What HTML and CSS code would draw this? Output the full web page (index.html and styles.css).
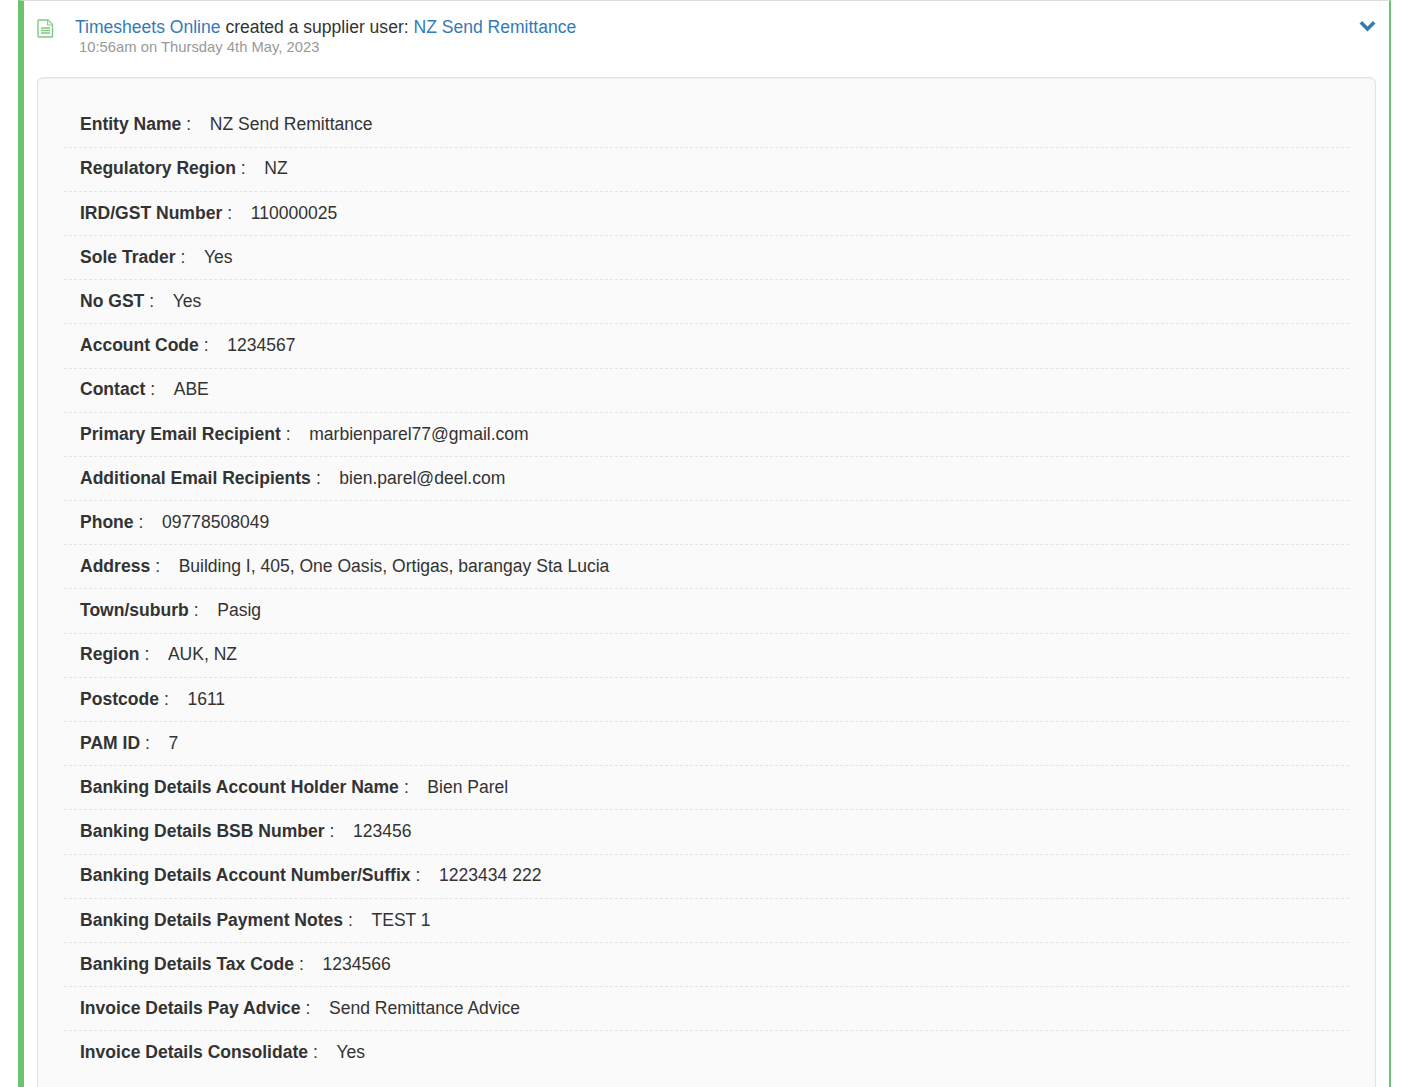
FILE: index.html
```html
<!DOCTYPE html>
<html lang="en">
<head>
<meta charset="utf-8">
<title>Timeline</title>
<link rel="stylesheet" href="styles.css">
</head>
<body>
<div class="entry">
  <div class="head">
    <svg class="doc" width="17" height="19" viewBox="0 0 17 19" aria-hidden="true">
      <path d="M1.500 1h9.500l4.500 4.500V17.500a.5.5 0 0 1-.5.5H1.500a.5.5 0 0 1-.5-.5V1.500a.5.5 0 0 1 .5-.5z" fill="#fff" stroke="#7fc97f" stroke-width="1.4"/>
      <path d="M10.500 1v5h5" fill="#e8f5e0" stroke="#8fce8f" stroke-width="1.2"/>
      <path d="M4 9h9M4 11.500h9M4 14h9" stroke="#7fc97f" stroke-width="1.3"/>
    </svg>
    <div class="titles">
      <div class="title"><a href="#">Timesheets Online</a> created a supplier user: <a href="#">NZ Send Remittance</a></div>
      <div class="time">10:56am on Thursday 4th May, 2023</div>
    </div>
    <svg class="chev" width="17" height="12" viewBox="0 0 17 12" aria-hidden="true">
      <path d="M1.800 2.300l6.700 6.700 6.700-6.700" fill="none" stroke="#337ab7" stroke-width="3.600"/>
    </svg>
  </div>
  <div class="panel">
    <div class="row"><b>Entity Name</b><span class="colon">:</span><span>NZ Send Remittance</span></div>
    <div class="row"><b>Regulatory Region</b><span class="colon">:</span><span>NZ</span></div>
    <div class="row"><b>IRD/GST Number</b><span class="colon">:</span><span>110000025</span></div>
    <div class="row"><b>Sole Trader</b><span class="colon">:</span><span>Yes</span></div>
    <div class="row"><b>No GST</b><span class="colon">:</span><span>Yes</span></div>
    <div class="row"><b>Account Code</b><span class="colon">:</span><span>1234567</span></div>
    <div class="row"><b>Contact</b><span class="colon">:</span><span>ABE</span></div>
    <div class="row"><b>Primary Email Recipient</b><span class="colon">:</span><span>marbienparel77@gmail.com</span></div>
    <div class="row"><b>Additional Email Recipients</b><span class="colon">:</span><span>bien.parel@deel.com</span></div>
    <div class="row"><b>Phone</b><span class="colon">:</span><span>09778508049</span></div>
    <div class="row"><b>Address</b><span class="colon">:</span><span>Building I, 405, One Oasis, Ortigas, barangay Sta Lucia</span></div>
    <div class="row"><b>Town/suburb</b><span class="colon">:</span><span>Pasig</span></div>
    <div class="row"><b>Region</b><span class="colon">:</span><span>AUK, NZ</span></div>
    <div class="row"><b>Postcode</b><span class="colon">:</span><span>1611</span></div>
    <div class="row"><b>PAM ID</b><span class="colon">:</span><span>7</span></div>
    <div class="row"><b>Banking Details Account Holder Name</b><span class="colon">:</span><span>Bien Parel</span></div>
    <div class="row"><b>Banking Details BSB Number</b><span class="colon">:</span><span>123456</span></div>
    <div class="row"><b>Banking Details Account Number/Suffix</b><span class="colon">:</span><span>1223434 222</span></div>
    <div class="row"><b>Banking Details Payment Notes</b><span class="colon">:</span><span>TEST 1</span></div>
    <div class="row"><b>Banking Details Tax Code</b><span class="colon">:</span><span>1234566</span></div>
    <div class="row"><b>Invoice Details Pay Advice</b><span class="colon">:</span><span>Send Remittance Advice</span></div>
    <div class="row"><b>Invoice Details Consolidate</b><span class="colon">:</span><span>Yes</span></div>
  </div>
</div>
</body>
</html>
```
FILE: styles.css
```css
html, body {
  margin: 0;
  height: 100%;
  overflow: hidden;
  background: #fff;
}
body {
  font-family: "Liberation Sans", Arial, sans-serif;
  font-size: 17.55px;
  color: #333;
  padding: 0 17px 0 18px;
}
.entry {
  border-left: 6px solid #6cc36c;
  border-right: 2px solid #6cc36c;
  border-top: 1px solid #ddd;
  padding: 0 13px;
  height: 1087px;
  box-sizing: border-box;
  overflow: hidden;
}
.head {
  display: flex;
  align-items: flex-start;
  height: 76px;
}
.doc {
  margin-top: 18px;
  flex: none;
}
.titles {
  margin-left: 21px;
  flex: 1;
  padding-top: 15px;
}
.title {
  line-height: 22px;
}
.title a {
  color: #337ab7;
  text-decoration: none;
}
.time {
  margin-left: 4px;
  margin-top: 1px;
  font-size: 14.8px;
  line-height: 16px;
  color: #999;
}
.chev {
  margin-top: 19px;
  flex: none;
}
.panel {
  background: #fafafa;
  border: 1px solid #e3e3e3;
  border-radius: 6px;
  padding: 25.4px 26px 0;
  height: 1100px;
  box-sizing: border-box;
  box-shadow: inset 0 1px 1px rgba(0, 0, 0, 0.05);
}
.row {
  height: 44.2px;
  box-sizing: border-box;
  line-height: 41.7px;
  padding: 0.8px 0 0 16px;
  border-bottom: 1px dashed #e4e4e4;
  display: flex;
}
.row:last-child {
  border-bottom: 0;
}
.colon {
  margin-left: 5px;
  margin-right: 18.6px;
}
b {
  color: #333;
}
```
